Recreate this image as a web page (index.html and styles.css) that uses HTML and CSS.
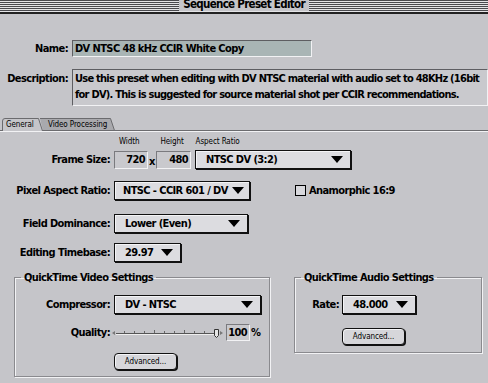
FILE: index.html
```html
<!DOCTYPE html>
<html lang="en">
<head>
    <meta charset="UTF-8">
    <title>Sequence Preset Editor</title>
    <link rel="stylesheet" href="styles.css">
</head>
<body>
<div class="titlebar">
    <span class="title">Sequence Preset Editor</span>
</div>

<div class="window">
    <div class="top-row name-row">
        <label>Name:</label>
        <div class="textfield name-field">DV NTSC 48 kHz CCIR White Copy</div>
    </div>

    <div class="top-row desc-row">
        <label>Description:</label>
        <div class="textfield desc-field">Use this preset when editing with DV NTSC material with audio set to 48KHz (16bit<br>for DV). This is suggested for source material shot per CCIR recommendations.</div>
    </div>

    <div class="tabs">
        <div class="tab tab-active">
            <svg class="tab-shape" width="42" height="13" viewBox="0 0 42 13">
                <path d="M0.5 13 V3 Q0.5 0.5 3 0.5 H36.5 L40.5 13" fill="#c5c5c9" stroke="#6b6b6e"/>
            </svg>
            <span>General</span>
        </div>
        <div class="tab">
            <svg class="tab-shape" width="76" height="13" viewBox="0 0 76 13">
                <path d="M0 0.5 H70.5 L74.5 12.5 H3" fill="#a9a9ad" stroke="#6b6b6e"/>
            </svg>
            <span>Video Processing</span>
        </div>
    </div>

    <div class="panel">
        <div class="form-grid">
            <div></div>
            <div class="captions">
                <span class="cap-w">Width</span>
                <span class="cap-h">Height</span>
                <span class="cap-a">Aspect Ratio</span>
            </div>

            <label class="row-frame">Frame Size:</label>
            <div class="controls row-frame">
                <div class="numfield w-width">720</div>
                <span class="times">x</span>
                <div class="numfield w-height">480</div>
                <div class="popup w-aspect"><span>NTSC DV (3:2)</span><i class="arrow"></i></div>
            </div>

            <label class="row-pixel">Pixel Aspect Ratio:</label>
            <div class="controls row-pixel">
                <div class="popup w-pixel"><span>NTSC - CCIR 601 / DV</span><i class="arrow"></i></div>
                <div class="checkbox-wrap"><span class="checkbox"></span>Anamorphic 16:9</div>
            </div>

            <label class="row-field">Field Dominance:</label>
            <div class="controls row-field">
                <div class="popup w-field"><span>Lower (Even)</span><i class="arrow"></i></div>
            </div>

            <label class="row-base">Editing Timebase:</label>
            <div class="controls row-base">
                <div class="popup w-base"><span>29.97</span><i class="arrow"></i></div>
            </div>
        </div>

        <div class="groups">
            <fieldset class="group video-group">
                <legend>QuickTime Video Settings</legend>
                <div class="group-grid video-grid">
                    <label>Compressor:</label>
                    <div class="popup w-comp"><span>DV - NTSC</span><i class="arrow"></i></div>

                    <label class="quality-label">Quality:</label>
                    <div class="quality">
                        <svg class="slider" width="112" height="12" viewBox="0 0 112 12">
                            <path d="M0 6 L3 4 V8 Z" fill="#777"/>
                            <line x1="4" y1="6.5" x2="103" y2="6.5" stroke="#555"/>
                            <line x1="4" y1="7.5" x2="103" y2="7.5" stroke="#eee"/>
                            <g stroke="#666">
                                <line x1="12.5" y1="4" x2="12.5" y2="6"/>
                                <line x1="22.5" y1="4" x2="22.5" y2="6"/>
                                <line x1="32.5" y1="4" x2="32.5" y2="6"/>
                                <line x1="42.5" y1="3" x2="42.5" y2="6"/>
                                <line x1="52.5" y1="4" x2="52.5" y2="6"/>
                                <line x1="62.5" y1="4" x2="62.5" y2="6"/>
                                <line x1="72.5" y1="3" x2="72.5" y2="6"/>
                                <line x1="82.5" y1="4" x2="82.5" y2="6"/>
                                <line x1="92.5" y1="4" x2="92.5" y2="6"/>
                            </g>
                            <path d="M102.5 2.5 H106.5 V8.5 L104.5 10.5 L102.5 8.5 Z" fill="#e6e6e6" stroke="#333"/>
                            <path d="M108 4 L111 6 L108 8 Z" fill="#777"/>
                        </svg>
                        <div class="numfield w-quality">100</div>
                        <span class="percent">%</span>
                    </div>

                    <div></div>
                    <div class="btn-row"><button class="btn">Advanced...</button></div>
                </div>
            </fieldset>

            <fieldset class="group audio-group">
                <legend>QuickTime Audio Settings</legend>
                <div class="group-grid audio-grid">
                    <label>Rate:</label>
                    <div class="popup w-rate"><span>48.000</span><i class="arrow"></i></div>

                    <div></div>
                    <div class="btn-row"><button class="btn">Advanced...</button></div>
                </div>
            </fieldset>
        </div>
    </div>
</div>
</body>
</html>
```

FILE: styles.css
```css
:root {
    --win-bg: #c5c5c9;
    --field-bg: #c9c9cd;
    --popup-bg: #dcdce0;
    --name-bg: #a9b5b5;
    --dark-edge: #5e5e62;
    --light-edge: #f2f2f4;
    --text: #000;
}

* {
    box-sizing: border-box;
}

body {
    margin: 0;
    width: 488px;
    height: 383px;
    overflow: hidden;
    background-color: var(--win-bg);
    color: var(--text);
    font-family: "DejaVu Sans Condensed", sans-serif;
    font-weight: bold;
    font-size: 11px;
    letter-spacing: -0.6px;
}

label {
    white-space: nowrap;
}

/* title bar with pinstripes */
.titlebar {
    height: 14px;
    display: flex;
    justify-content: center;
    align-items: flex-end;
    background: repeating-linear-gradient(to bottom, #4a4a4e 0 1px, #e4e4e6 1px 2px);
    border-bottom: 2px solid #222;
    overflow: hidden;
}

.title {
    background-color: var(--win-bg);
    padding: 0 4px;
    line-height: 14px;
    font-size: 11.5px;
    letter-spacing: -0.7px;
    margin-bottom: 1px;
}

.window {
    padding-top: 26px;
}

.top-row {
    display: grid;
    grid-template-columns: 68px 1fr;
    column-gap: 4px;
    align-items: center;
}

.top-row label {
    text-align: right;
}

.name-row {
    height: 17px;
}

.desc-row {
    margin-top: 12px;
    align-items: start;
}

.desc-row label {
    padding-top: 3px;
}

.textfield {
    border-top: 1px solid var(--dark-edge);
    border-left: 1px solid var(--dark-edge);
    border-bottom: 1px solid var(--light-edge);
    border-right: 1px solid var(--light-edge);
}

.name-field {
    width: 240px;
    height: 17px;
    background-color: var(--name-bg);
    padding: 0 2px;
    line-height: 15px;
}

.desc-field {
    height: 37px;
    background-color: var(--field-bg);
    padding: 1px 2px;
    line-height: 16px;
    white-space: nowrap;
    letter-spacing: -0.75px;
    overflow: hidden;
}

/* tabs */
.tabs {
    display: flex;
    margin-top: 12px;
    padding-left: 2px;
    height: 13px;
    border-bottom: 1px solid #6b6b6e;
}

.tab {
    position: relative;
    height: 13px;
    font-weight: normal;
    font-size: 8px;
    letter-spacing: -0.1px;
    line-height: 14px;
}

.tab span {
    position: relative;
    padding-left: 4px;
}

.tab-shape {
    position: absolute;
    left: 0;
    top: 0;
}

.tab-active {
    width: 38px;
    z-index: 2;
}

.tab-active + .tab {
    width: 76px;
}

.tab-active + .tab span {
    padding-left: 8px;
}

.panel {
    border-top: 1px solid var(--light-edge);
}

/* main form */
.form-grid {
    display: grid;
    grid-template-columns: 110px auto;
    column-gap: 4px;
    align-items: center;
}

.form-grid label {
    text-align: right;
}

.captions {
    height: 10px;
    margin-top: 5px;
    display: flex;
    font-weight: normal;
    font-size: 8px;
    letter-spacing: -0.1px;
    line-height: 10px;
}

.cap-w { margin-left: 5px; }
.cap-h { margin-left: 21px; }
.cap-a { margin-left: 12px; }

.controls {
    display: flex;
    align-items: center;
}

.row-frame { margin-top: 3px; }
.row-pixel { margin-top: 12px; }
.row-field { margin-top: 14px; }
.row-base { margin-top: 10px; }

.numfield {
    height: 18px;
    background-color: var(--field-bg);
    border-top: 1px solid #7a7a7e;
    border-left: 1px solid #7a7a7e;
    border-bottom: 1px solid var(--light-edge);
    border-right: 1px solid var(--light-edge);
    text-align: right;
    padding-right: 2px;
    line-height: 16px;
}

.w-width { width: 34px; }
.w-height { width: 35px; }

.times {
    width: 7px;
    margin-left: 1px;
    padding-top: 4px;
}

.popup {
    height: 19px;
    display: flex;
    align-items: center;
    justify-content: space-between;
    gap: 4px;
    background-color: var(--popup-bg);
    border: 1px solid #111;
    box-shadow: 1px 1px 0 #111, inset 1px 1px 0 #f4f4f6;
    padding: 0 7px 0 10px;
    white-space: nowrap;
}

.arrow {
    flex: none;
    width: 0;
    height: 0;
    border-left: 6px solid transparent;
    border-right: 6px solid transparent;
    border-top: 7px solid #000;
}

.w-aspect { width: 156px; margin-left: 4px; }
.w-pixel { width: 136px; padding-left: 8px; }
.w-field { width: 134px; }
.w-base { width: 67px; }
.w-comp { width: 147px; }
.w-rate { width: 74px; }

.checkbox-wrap {
    display: flex;
    align-items: center;
    margin-left: 45px;
    white-space: nowrap;
}

.checkbox {
    width: 11px;
    height: 11px;
    border: 1px solid #000;
    background-color: #d8d8dc;
    margin-right: 3px;
}

/* group boxes */
.groups {
    display: flex;
    align-items: flex-start;
    margin-top: 9px;
    padding-left: 14px;
}

.group {
    margin: 0;
    padding: 0;
    border: 1px solid #8a8a8e;
    box-shadow: 1px 1px 0 var(--light-edge), inset 1px 1px 0 var(--light-edge);
}

.group legend {
    margin-left: 6px;
    padding: 0 3px;
    line-height: 13px;
}

.video-group {
    width: 256px;
    height: 106px;
}

.audio-group {
    width: 188px;
    height: 82px;
    margin-left: 24px;
}

.group-grid {
    display: grid;
    column-gap: 4px;
    align-items: center;
}

.group-grid label {
    text-align: right;
}

.video-grid {
    grid-template-columns: 95px auto;
    padding-top: 11px;
}

.audio-grid {
    grid-template-columns: 44px auto;
    padding-top: 11px;
    column-gap: 3px;
}

.quality-label {
    margin-top: 10px;
}

.quality {
    display: flex;
    align-items: center;
    margin-top: 10px;
}

.slider {
    margin-left: -2px;
}

.w-quality {
    width: 24px;
    height: 17px;
    margin-left: 2px;
    line-height: 15px;
}

.percent {
    padding-left: 1px;
}

.btn-row {
    margin-top: 12px;
}

.audio-grid .btn-row {
    margin-top: 14px;
}

.btn {
    width: 63px;
    height: 17px;
    padding: 0;
    font-family: "DejaVu Sans Condensed", sans-serif;
    font-size: 8px;
    letter-spacing: -0.1px;
    color: #000;
    background-color: #d6d6da;
    border: 1px solid #111;
    border-radius: 4px;
    box-shadow: 1px 1px 0 #111, inset 1px 1px 0 #f4f4f6;
}
```
